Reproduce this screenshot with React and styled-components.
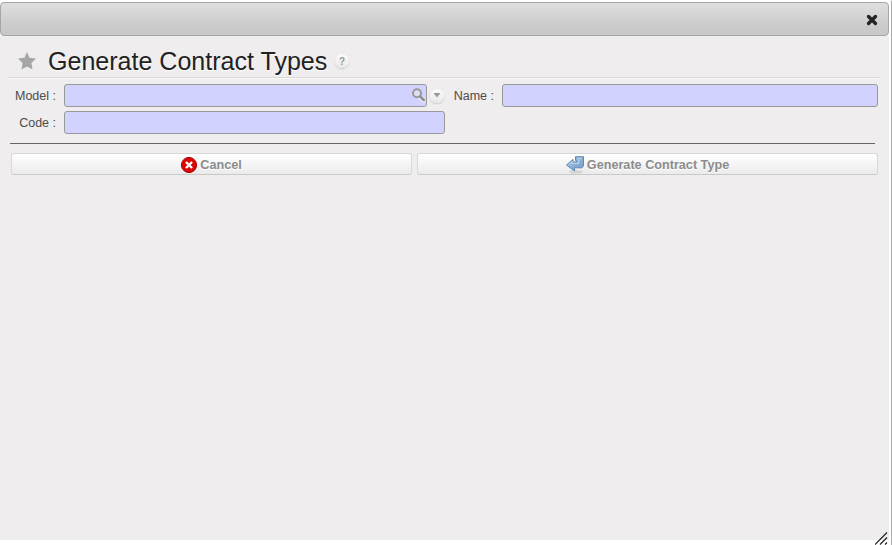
import React from "react";
import styled, { createGlobalStyle } from "styled-components";

const GlobalStyle = createGlobalStyle`
  * { box-sizing: border-box; }
  body { margin: 0; background: #fff; overflow: hidden; font-family: "Liberation Sans", Arial, sans-serif; }
`;

const Dialog = styled.div`
  position: relative;
  width: 892px;
  height: 545px;
  padding-top: 2px;
  border-right: 1px solid #aaa;
  border-top-right-radius: 2px;
  background: #fff;
`;

const TitleBar = styled.header`
  display: flex;
  align-items: center;
  justify-content: flex-end;
  width: 889px;
  height: 34px;
  padding-right: 10px;
  border: 1px solid #a6a6a6;
  border-radius: 4px;
  background: linear-gradient(#dfdfdf, #cacaca 75%, #c8c8c8);
`;

const CloseButton = styled.button`
  display: flex;
  padding: 0;
  border: 0;
  margin-top: 2px;
  background: none;
`;

const Content = styled.main`
  width: 889px;
  height: 504px;
  padding: 8px 9px 0;
  background: #efedee;
`;

const Heading = styled.div`
  display: flex;
  align-items: center;
  width: 871px;
  height: 35px;
  padding-left: 9px;
  border-bottom: 1px solid #fbfafa;
  box-shadow: inset 0 -1px #d9d7d8;
`;

const Title = styled.h1`
  width: 281px;
  margin: 0 6px 0 12px;
  color: #222;
  font-size: 26px;
  font-weight: 400;
  line-height: 30px;
  white-space: nowrap;
  text-shadow: 0 1px #fff;
  transform: scaleX(0.963);
  transform-origin: left center;
`;

const RoundBadge = styled.span`
  display: flex;
  align-items: center;
  justify-content: center;
  width: 14px;
  height: 14px;
  border-radius: 50%;
  background: linear-gradient(#fcfcfc, #e8e8e8);
  box-shadow: 0 1px 2px rgba(0, 0, 0, 0.16);
  color: #999;
  font-size: 10px;
  font-weight: 700;
`;

const Form = styled.form`
  display: grid;
  grid-template-columns: 47px 381px 41px 376px;
  grid-template-rows: 23px 23px;
  column-gap: 8px;
  row-gap: 4px;
  width: 871px;
  padding-top: 5px;
`;

const Label = styled.label`
  align-self: center;
  color: #4c4c4c;
  font-size: 12.5px;
  line-height: 16px;
  text-align: right;
  white-space: nowrap;
`;

const Combo = styled.div`
  display: flex;
  align-items: center;
  gap: 3px;
`;

const Field = styled.div`
  display: flex;
  align-items: center;
  justify-content: flex-end;
  flex: none;
  width: ${({ $width }) => $width}px;
  height: 23px;
  border: 1px solid #999;
  border-radius: 3px;
  background: #d2d2ff;
`;

const Separator = styled.hr`
  width: 865px;
  height: 1px;
  margin: 9px 0 9px 1px;
  border: 0;
  background: #666;
`;

const Actions = styled.div`
  display: grid;
  grid-template-columns: 401px 461px;
  gap: 5px;
  padding-left: 2px;
`;

const ActionButton = styled.button`
  display: flex;
  align-items: center;
  justify-content: center;
  gap: ${({ $gap }) => $gap}px;
  height: 22px;
  padding: 1px 0 0;
  border: 1px solid #d8d8d8;
  border-bottom-color: #c8cac9;
  border-radius: 3px;
  background: linear-gradient(#fff, #ebebeb);
  color: #8c8c8c;
  font: 700 12.65px/16px "Liberation Sans", Arial, sans-serif;
  text-shadow: 0 1px #fff;
  white-space: nowrap;
`;

const ResizeGrip = styled.svg`
  position: absolute;
  right: 0;
  bottom: 0;
`;

const StarIcon = () => (
  <svg width="18" height="18" viewBox="0 0 18 18">
    <path d="M9 0 11.5 5.8 18 6.4 13.4 11 14.5 17.4 9 14.4 3.5 17.4 4.6 11 0 6.4 6.5 5.8Z" fill="#a6a6a6" />
  </svg>
);

const CloseIcon = () => (
  <svg width="12" height="12" viewBox="0 0 12 12">
    <path d="M2.5 2.5 9.5 9.5M9.5 2.5 2.5 9.5" stroke="#222" strokeWidth="3.3" strokeLinecap="round" />
  </svg>
);

const SearchIcon = () => (
  <svg width="15" height="15" viewBox="0 0 15 15" fill="none">
    <path d="m8.5 8.5 4 4" stroke="#fff" strokeWidth="4" strokeLinecap="round" opacity=".65" />
    <circle cx="6" cy="5.3" r="4" stroke="#999" strokeWidth="2" fill="#dedef5" />
    <path d="m9.3 8.7 3.5 3.5" stroke="#8c8c8c" strokeWidth="2.6" strokeLinecap="round" />
  </svg>
);

const CancelIcon = () => (
  <svg width="16" height="16" viewBox="0 0 16 16">
    <circle cx="8" cy="8" r="7.6" fill="#d90808" stroke="#b30000" strokeWidth="1" />
    <path d="m5 5 6 6m0-6-6 6" stroke="#fff" strokeWidth="2.4" />
  </svg>
);

const ReturnIcon = () => (
  <svg width="18" height="18" viewBox="0 0 18 18">
    <defs>
      <linearGradient id="arrowBlue" x1="0" y1="0" x2="1" y2="1">
        <stop stopColor="#a9c9e7" />
        <stop offset="1" stopColor="#7099c4" />
      </linearGradient>
    </defs>
    <ellipse cx="10" cy="15.7" rx="7" ry="1.8" fill="#777" opacity=".2" />
    <path d="M.5 9 7 3.5V6h3.5V4.5h-1V.7h8v9l-1.5 2.1H8.5V15Z" fill="url(#arrowBlue)" stroke="#5b89b8" strokeLinejoin="round" />
    <path d="M2.7 8.8 6.3 5.8v1.6h6.5V2.3h3" fill="none" stroke="#cfe2f4" strokeWidth=".8" />
  </svg>
);

export default function App() {
  return (
    <>
      <GlobalStyle />
      <Dialog>
        <TitleBar>
          <CloseButton aria-label="Close"><CloseIcon /></CloseButton>
        </TitleBar>
        <Content>
          <Heading>
            <StarIcon />
            <Title>Generate Contract Types</Title>
            <RoundBadge>?</RoundBadge>
          </Heading>
          <Form>
            <Label>Model :</Label>
            <Combo>
              <Field $width={363}><SearchIcon /></Field>
              <RoundBadge>
                <svg width="8" height="5" viewBox="0 0 8 5"><path d="M.5 0h7L4 4.5Z" fill="#999" /></svg>
              </RoundBadge>
            </Combo>
            <Label>Name :</Label>
            <Field $width={376} />
            <Label>Code :</Label>
            <Field $width={381} />
          </Form>
          <Separator />
          <Actions>
            <ActionButton $gap={3}><CancelIcon />Cancel</ActionButton>
            <ActionButton $gap={3}><ReturnIcon />Generate Contract Type</ActionButton>
          </Actions>
        </Content>
        <ResizeGrip width="16" height="14" viewBox="0 0 16 14">
          <path d="M0 13.5 12 1.5M5 13.5l7-7M10 13.5l2-2" stroke="#222" strokeWidth="1.2" />
        </ResizeGrip>
      </Dialog>
    </>
  );
}
